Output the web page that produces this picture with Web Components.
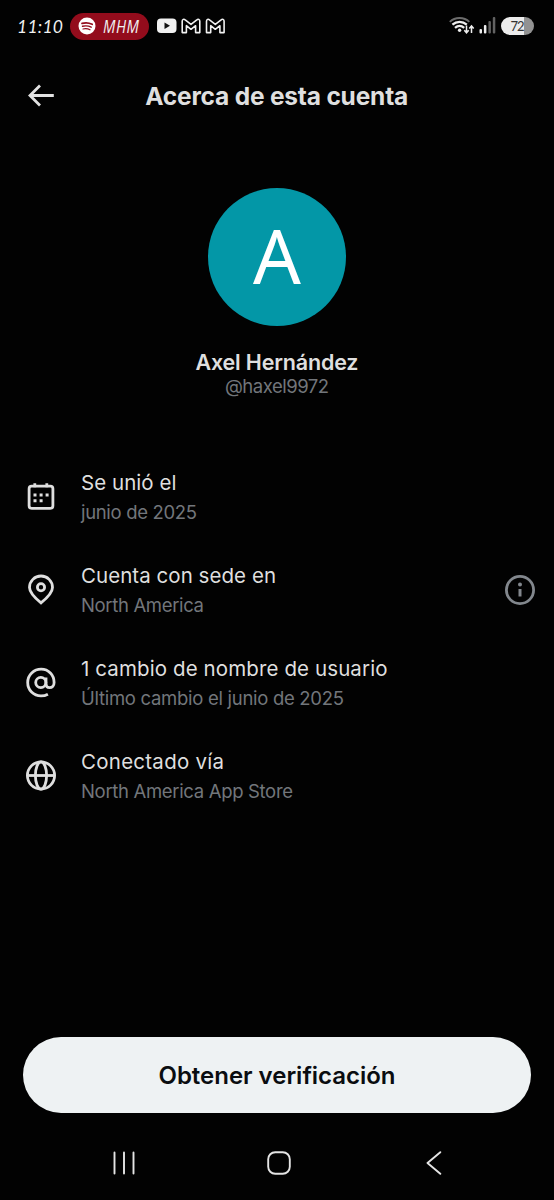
<!DOCTYPE html>
<html lang="es">
<head>
<meta charset="utf-8">
<title>Acerca de esta cuenta</title>
<style>
html,body{margin:0;background:#020202}
body{font-family:Inter,"Liberation Sans",sans-serif;color:#dfdfdf}
</style>
</head>
<body>
<account-screen></account-screen>
<script>
const define = (name, html, connected) => {
  const template = document.createElement('template');
  template.innerHTML = html;
  customElements.define(name, class extends HTMLElement {
    constructor() {
      super();
      this.attachShadow({ mode: 'open' }).append(template.content.cloneNode(true));
    }
    connectedCallback() { if (connected) connected(this); }
  });
};

// One line of text whose tracking is adjusted to a given width.
define('text-line', `<style>
:host{display:block;white-space:nowrap}
span{display:inline-block}
</style><span><slot></slot></span>`, el => {
  const span = el.shadowRoot.querySelector('span');
  const width = Number(el.getAttribute('width'));
  const count = el.textContent.length;
  const gap = (width - parseFloat(getComputedStyle(span).width)) / (count - 1);
  span.style.letterSpacing = gap.toFixed(3) + 'px';
  span.style.marginRight = (-gap).toFixed(3) + 'px';
});

const icons = {
  calendar: '<rect x="4.1" y="5.2" width="23.8" height="22.1" rx="2.6"/><path d="M9.8 2.2v4M21.8 2.2v4"/><path d="M8.5 12.5h3v3h-3zM14.6 12.5h3v3h-3zM20.6 12.5h3v3h-3zM8.5 18.2h3v3h-3zM14.6 18.2h3v3h-3z" fill="currentColor" stroke="none"/>',
  pin: '<path d="M16 28.900C11 24.800 4.500 19.300 4.500 13.500a11.500 11.500 0 0 1 23 0c0 5.800-6.500 11.300-11.500 15.400z"/><circle cx="16" cy="13.300" r="3.600"/>',
  at: '<circle cx="15.800" cy="15.500" r="5.100"/><path d="M21 10.500v6.200c0 2.700 1.500 4 3.600 4 2.600 0 4.500-2.200 4.500-5.200C29.100 7.900 23.500 2.200 16.200 2.200S2.700 7.900 2.700 15.500 8.500 28.900 16 28.900c2.700 0 4.900-.6 6.900-1.700"/>',
  globe: '<circle cx="16" cy="15.500" r="13.600"/><ellipse cx="16" cy="15.500" rx="5.600" ry="13.600"/><path d="M2.400 15.500h27.200"/>',
  info: '<circle cx="16" cy="16" r="13.600"/><path d="M16 15v7.500" stroke-width="3"/><circle cx="16" cy="10.500" r="2" fill="currentColor" stroke="none"/>',
  back: '<path d="M28.800 15.500H5.500M15 5.500 5 15.500l10 10"/>'
};
define('line-icon', `<style>
:host{display:block;width:32px;height:32px;flex:none}
svg{display:block;fill:none;stroke:currentColor;stroke-width:2.800}
</style><svg width="32" height="32" viewBox="0 0 32 32"></svg>`, el => {
  el.shadowRoot.querySelector('svg').innerHTML = icons[el.getAttribute('name')];
});

define('status-bar', `<style>
:host{display:flex;height:53px;box-sizing:border-box;padding:0 20px 1px 17px;align-items:center;font-family:Lato,sans-serif;font-style:italic;color:#f0f0f0}
svg{display:block;flex:none}
.time{font-size:17.500px;width:53px}
.music{display:flex;align-items:center;height:27px;width:79px;box-sizing:border-box;padding-left:8px;gap:7px;border-radius:14px;background:#930c1c;font:italic 500 19px/24px "Open Sans",sans-serif}
.music text-line{transform:scaleX(.78);transform-origin:0 50%}
.tray{margin-left:8px}
.signals{margin-left:auto}
.battery{display:flex;align-items:center;justify-content:center;margin-left:5px;width:33px;height:18px;border-radius:9px;background:linear-gradient(90deg,#ececec 0 23px,#929292 23px);color:#333;font-size:13px;font-style:normal}
</style>
<text-line class="time" width="46">11:10</text-line>
<div class="music"><svg width="18" height="18" viewBox="0 0 18 18"><circle cx="9" cy="9" r="8.500" fill="#fff"/><g fill="none" stroke="#930c1c" stroke-linecap="round"><path d="M4 6.400c3.500-1 7-.7 10.200.9" stroke-width="1.700"/><path d="M4.500 9.300c3-.8 6-.5 8.700.9" stroke-width="1.400"/><path d="M5 12c2.600-.6 4.900-.3 7 .8" stroke-width="1.200"/></g></svg><text-line width="46">MHM</text-line></div>
<svg class="tray" width="68" height="18" viewBox="0 0 68 18"><rect x="0" y="1.500" width="19.500" height="14.500" rx="4" fill="#f1f1f1"/><path d="M7.500 5.500v6.500l5.500-3.250z" fill="#111"/><g fill="none" stroke="#f1f1f1" stroke-width="1.600" stroke-linejoin="round"><path id="m" d="M25.200 15.600V4.200c0-1.900 1.700-2.500 3-1.400l5.800 4.600 5.800-4.600c1.300-1.100 3-.5 3 1.400v11.400h-4.200V8.700L34 12.300l-4.600-3.600v6.900z"/><use href="#m" x="24.300"/></g></svg>
<svg class="signals" width="47" height="20" viewBox="0 0 47 20"><g fill="none" stroke="#eee" stroke-width="2"><path d="M.8 5.900c5.300-5.200 14.200-5.200 19.500 0" stroke="#6c6c6c"/><path d="M3.400 8.700c4.300-3.800 10.100-3.800 14.400 0M6 11.900c2.900-2.500 6.300-2.500 9.200 0" stroke-width="2.300"/><path d="M17.500 9.500v7M15.300 14.300l2.200 2.500 2.200-2.500M22.500 17v-7M20.300 12.500l2.200-2.500 2.200 2.500" stroke-width="1.500"/></g><circle cx="10.600" cy="14.300" r="1.700" fill="#eee"/><rect x="30.500" y="13" width="2.500" height="4.500" rx="1" fill="#eee"/><rect x="34.900" y="9" width="2.500" height="8.500" rx="1" fill="#eee"/><rect x="39.400" y="5" width="2.500" height="12.500" rx="1" fill="#626262"/><rect x="43.800" y="1" width="2.500" height="16.500" rx="1" fill="#626262"/></svg>
<div class="battery"><text-line width="14">72</text-line></div>`);

define('page-header', `<style>
:host{display:grid;grid-template-columns:32px 1fr 32px;align-items:center;height:85px;padding:0 25px 1px 24.500px}
line-icon{color:#e2e2e2}
text-line{justify-self:center;font-size:24.500px;font-weight:700}
</style><line-icon name="back"></line-icon><text-line width="263">Acerca de esta cuenta</text-line><span></span>`);

define('profile-card', `<style>
:host{display:flex;flex-direction:column;align-items:center;padding-top:49px}
.avatar{width:138px;height:138px;border-radius:50%;background:#0397a7;color:#fff;display:flex;align-items:center;justify-content:center;font:400 75px/134px "Noto Sans",sans-serif}
.avatar span{padding-bottom:4px}
.name{margin-top:23px;font-size:21.500px;font-weight:600;line-height:26px}
.handle{font-size:18.500px;line-height:22px;color:#72767b}
</style><div class="avatar"><span>A</span></div><text-line class="name" width="163">Axel Hernández</text-line><text-line class="handle" width="104">@haxel9972</text-line>`);

define('info-row', `<style>
:host{display:flex;align-items:center;height:58px;padding:0 18.500px 2px 24.500px}
.text{flex:1;margin-left:24.500px}
::slotted([slot=title]){font-size:20.500px;line-height:30px}
::slotted([slot=detail]){font-size:18.500px;line-height:28px;color:#72767b}
::slotted([slot=end]){color:#82878d}
</style><slot name="icon"></slot><div class="text"><slot name="title"></slot><slot name="detail"></slot></div><slot name="end"></slot>`);

define('pill-button', `<style>
:host{display:block}
button{display:flex;align-items:center;justify-content:center;width:100%;height:76px;border:0;padding:1px 0 0;border-radius:38px;background:#eef2f3;color:#0a0d10;font:600 24px/30px Inter,"Liberation Sans",sans-serif}
</style><button><text-line width="237">Obtener verificación</text-line></button>`);

define('nav-bar', `<style>
:host{display:grid;grid-template-columns:repeat(3,155px);justify-content:center;align-items:center;justify-items:center;height:24px}
svg{display:block;fill:none;stroke:#e4e4e4;stroke-width:1.900;stroke-linecap:round;stroke-linejoin:round}
</style>
<svg width="24" height="24" viewBox="0 0 24 24"><path d="M2.500 1.500v21M12 1.500v21M21.500 1.500v21"/></svg>
<svg width="24" height="24" viewBox="0 0 24 24"><rect x="1.200" y="1.200" width="21.600" height="21.600" rx="7"/></svg>
<svg width="24" height="24" viewBox="0 0 24 24"><path d="M18.300 1.200 5.500 12l12.800 10.800"/></svg>`);

define('account-screen', `<style>
:host{display:flex;flex-direction:column;width:554px;height:1200px;overflow:hidden}
.rows{display:flex;flex-direction:column;gap:33px;margin-top:71px}
pill-button{margin:auto 23px 0}
nav-bar{margin:38px 0 25px;padding-left:4px}
</style>
<status-bar></status-bar>
<page-header></page-header>
<profile-card></profile-card>
<div class="rows">
<info-row><line-icon slot="icon" name="calendar"></line-icon><text-line slot="title" width="95.500">Se unió el</text-line><text-line slot="detail" width="116">junio de 2025</text-line></info-row>
<info-row><line-icon slot="icon" name="pin"></line-icon><text-line slot="title" width="195">Cuenta con sede en</text-line><text-line slot="detail" width="123">North America</text-line><line-icon slot="end" name="info"></line-icon></info-row>
<info-row><line-icon slot="icon" name="at"></line-icon><text-line slot="title" width="306.500">1 cambio de nombre de usuario</text-line><text-line slot="detail" width="263">Último cambio el junio de 2025</text-line></info-row>
<info-row><line-icon slot="icon" name="globe"></line-icon><text-line slot="title" width="143">Conectado vía</text-line><text-line slot="detail" width="212">North America App Store</text-line></info-row>
</div>
<pill-button></pill-button>
<nav-bar></nav-bar>`);
</script>
</body>
</html>
